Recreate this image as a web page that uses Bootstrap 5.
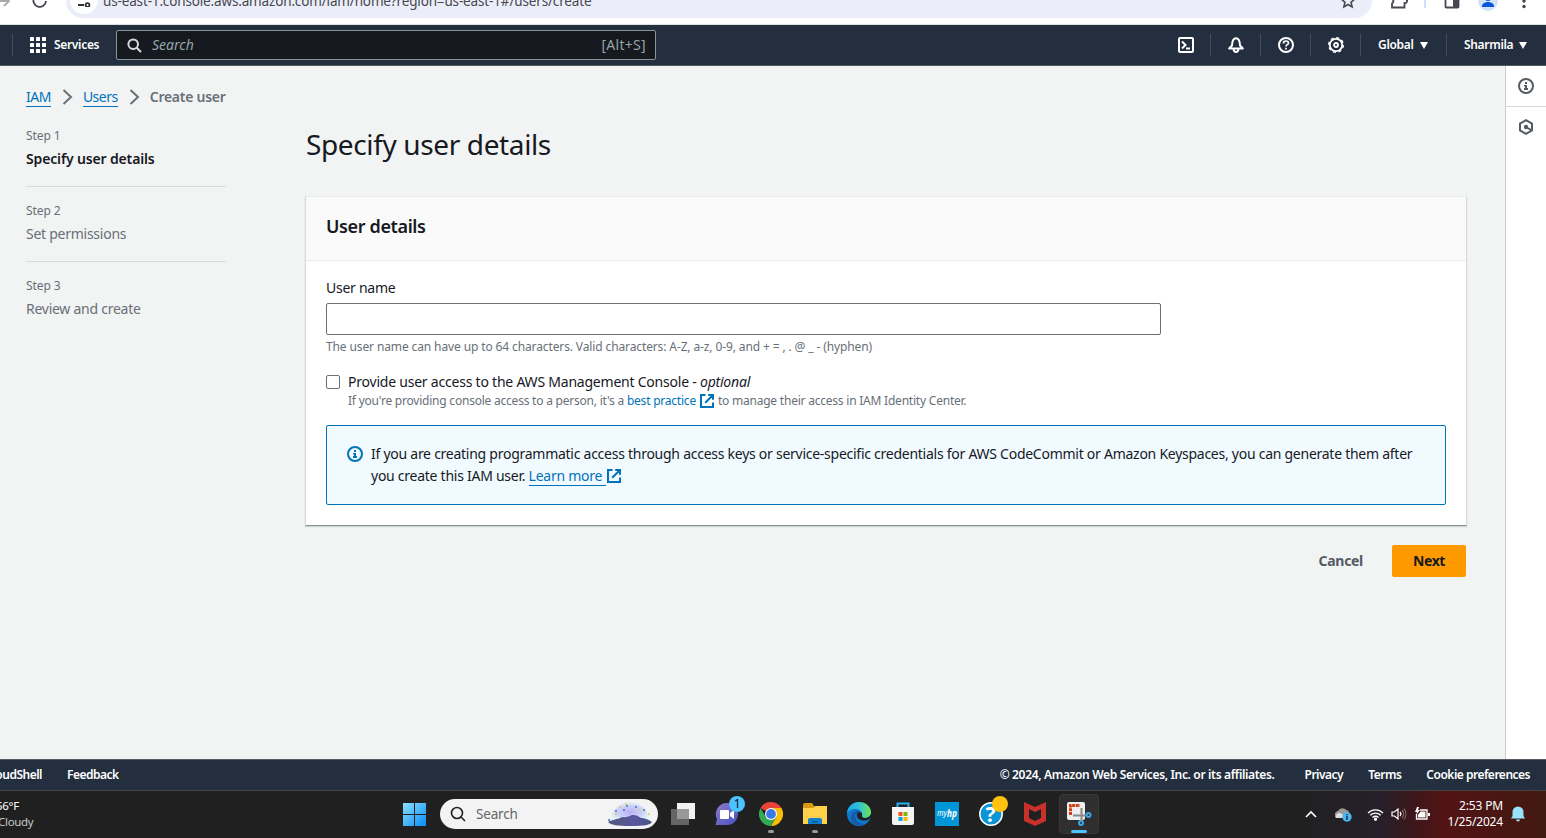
<!DOCTYPE html>
<html lang="en">
<head>
<meta charset="utf-8">
<title>Create user | IAM</title>
<link href="https://cdn.jsdelivr.net/npm/bootstrap@5.3.0/dist/css/bootstrap.min.css" rel="stylesheet">
<style>
body{font-family:"Noto Sans","Open Sans",sans-serif;font-size:14px;line-height:22px;letter-spacing:-.26px;color:#16191f;background:#f2f3f3;height:838px;overflow:hidden;white-space:nowrap}
svg{display:block;flex:none}
a{color:#0073bb}
.chrome-strip{height:25px;background:#fff;border-bottom:1px solid #dfe3e0}
.chrome-row{height:34px;margin-top:-16px}
.url-pill{width:1306px;height:34px;background:#ebeef9;border-radius:17px;color:#47474f;font-size:13.5px;letter-spacing:-.15px}
.site-chip{width:28px;height:28px;border-radius:50%;background:#fff;margin-top:-2px}
.aws-nav{height:41px;background:#232f3e;border-bottom:1px solid #545b64;color:#fff;font-size:12px;font-weight:600;letter-spacing:-.32px}
.nav-rule{width:1px;height:22px;background:#414d5c}
.aws-search{width:540px;height:30px;background:#16191f;border:1px solid #879596;border-radius:2px;color:#95a5a6;font-size:14px;font-weight:400;letter-spacing:0}
.shortcut{letter-spacing:.3px;margin-right:9px}
.nav-ico{width:49px}
.menu-arrow{margin-left:6px}
.workspace{height:693px}
.steps-col{width:200px;margin-left:26px}
.crumbs{height:22px;margin-top:20px;color:#687078}
.crumbs a{text-decoration:none;border-bottom:1px solid #0073bb;line-height:18px;letter-spacing:-.5px}
.crumb-sep{margin:0 10px 0 11px}
.step-item{height:75px;padding-top:17px;color:#687078}
.step-item+.step-item{border-top:1px solid #d5dbdb;padding-top:16px}
.step-no{font-size:12px;line-height:16px;margin-bottom:4px;letter-spacing:-.1px}
.step-now{color:#16191f;font-weight:600;letter-spacing:-.15px}
.form-col{width:1162px;margin-left:79px}
.form-col h1{font-size:28px;line-height:36px;font-weight:400;letter-spacing:-.37px;margin:60px 0 34px 1px}
.panel{background:#fff;border:1px solid #d5dbdb;border-top-color:#eaeded;border-bottom-color:#879596;height:330px;box-shadow:0 1px 1px rgba(0,28,36,.15)}
.panel-head{height:64px;background:#fafafa;border-bottom:1px solid #eaeded;padding:18px 20px}
.panel-head h2{font-size:18px;line-height:22px;font-weight:600;letter-spacing:-.37px;margin:0}
.panel-main{padding:16px 20px}
.name-input{width:835px;height:32px;border:1px solid #687078;border-radius:2px;margin-top:4px}
.hint{font-size:12px;line-height:16px;letter-spacing:-.12px;color:#687078}
.hint-tight{letter-spacing:-.22px}
.opt-row{margin-top:16px;gap:8px}
.opt-label{letter-spacing:-.22px}
.tickbox{width:14px;height:14px;border:1px solid #687078;border-radius:2px;margin-top:4px}
.info-box{height:80px;background:#f1faff;border:1px solid #0073bb;border-radius:2px;padding:17px 20px;margin-top:16px}
.info-box .mark-icon{margin:3px 8px 0 0;color:#0073bb}
.learn{height:21px;text-decoration:none;border-bottom:1px solid #0073bb}
.learn+svg{margin:4px 0 0 1px}
.actions{margin:19px 1px 0 0;gap:29px}
.btn-next,.btn-cancel{font-size:14px;font-weight:700;line-height:20px;padding:0 0 1px;border:0}
.btn-next{width:74px;height:32px;background:#f90;border-radius:2px;color:#16191f;letter-spacing:-.45px}
.btn-cancel{color:#545b64;letter-spacing:-.3px}
.help-rail{width:41px;background:#fff;border-left:1px solid #c9cfcf;color:#545b64}
.help-rail div{height:41px}
.help-rail div:first-child{border-bottom:1px solid #d5dbdb}
.help-rail div+div{height:40px}
.aws-foot{height:32px;background:#232f3e;border-top:1px solid #545b64;border-bottom:1px solid #444;color:#fff;font-size:12px;font-weight:600;letter-spacing:-.5px}
.taskbar{height:47px;padding-bottom:1px;font-size:12px;line-height:16px;letter-spacing:-.17px;color:#fff;background:linear-gradient(90deg,#202020 0,#202020 1300px,#26202a 1380px,#3a171c 1410px,#541315 1445px,#4a1614 1490px,#42190f 1546px)}
.weather{width:403px;font-size:11.5px;letter-spacing:-.3px}
.win-search{width:218px;height:30px;border-radius:15px;background:#f3f3f3;color:#666;font-size:13.5px;margin-left:14px}
.app{width:44px;height:46px;position:relative}
.app.running::after{content:"";position:absolute;left:19px;bottom:4px;width:6px;height:3px;border-radius:2px;background:#999}
.app.active-app::before{content:"";position:absolute;left:2px;top:3px;width:40px;height:40px;border-radius:4px;background:#2f2f2f;border:1px solid #383838}
.app.active-app::after{content:"";position:absolute;left:14px;bottom:4px;width:16px;height:3px;border-radius:2px;background:#4cc2ff}
.app svg{position:relative}
.app-dot{left:24px;top:5px;width:16px;height:16px;background:#4cc2ff;color:#111}
.app-dot.yellow{left:23px;background:#ffc20e}
</style>
</head>
<body>
<svg width="0" height="0" class="position-absolute"><defs>
<symbol id="ext" viewBox="0 0 14 14"><path d="M5.500 1H1v12h12V8.500M8.200 1H13v4.800M13 1 5.200 8.800" fill="none" stroke="#0073bb" stroke-width="2"/></symbol>
<symbol id="info" viewBox="0 0 16 16"><circle cx="8" cy="8" r="7" fill="none" stroke="currentColor" stroke-width="2"/><path d="M7 4h2v2H7zM6 7h3v3h1v2H6v-2h1V8.500H6z" fill="currentColor"/></symbol>
</defs></svg>

<div class="chrome-strip overflow-hidden"><div class="chrome-row d-flex align-items-center">
  <svg width="66" height="34" fill="none" stroke-width="1.800"><path d="M0 17h9M4 12l5 5-5 5" stroke="#aaa"/><path d="M46 17a6.300 6.300 0 1 1-2-5" stroke="#47474f"/></svg>
  <div class="url-pill d-flex align-items-center">
    <div class="site-chip ms-1 d-flex align-items-center justify-content-center"><svg width="14" height="14" fill="none" stroke="#333" stroke-width="1.800"><path d="M1 12h6M7 4h6"/><circle cx="10.500" cy="12" r="1.900"/><circle cx="3" cy="4" r="2"/></svg></div>
    <span style="margin-left:5px">us-east-1.console.aws.amazon.com/iam/home?region=us-east-1#/users/create</span>
    <svg class="ms-auto me-3" width="16" height="16" fill="none" stroke="#47474f" stroke-width="1.600"><path d="M8 1.500l1.900 4.300 4.700.4-3.600 3.100 1.100 4.600L8 11.500l-4.100 2.400L5 9.300 1.400 6.200l4.700-.4z"/></svg>
  </div>
  <svg width="174" height="34" fill="none"><path d="M20 23.500h12.500V19a2 2 0 0 0 1-4v-4H20v4a2.500 2.500 0 0 1 0 4.500z" stroke="#47474f" stroke-width="1.800"/><path d="M53 8v16" stroke="#cfe0fb" stroke-width="2"/><rect x="73.500" y="10" width="13" height="13.500" rx="1" stroke="#47474f" stroke-width="1.800"/><path d="M81 10h6v13h-6z" fill="#47474f"/><circle cx="116" cy="17" r="10" fill="#d3e3fd"/><circle cx="116" cy="14" r="3" fill="#0b57d0"/><path d="M110 23v-1c0-3 4-4 6-4s6 1 6 4v1z" fill="#0b57d0"/><g fill="#47474f"><circle cx="152" cy="11.500" r="1.700"/><circle cx="152" cy="17" r="1.700"/><circle cx="152" cy="22.500" r="1.700"/></g></svg>
</div></div>

<nav class="aws-nav d-flex align-items-center">
  <div class="nav-rule" style="margin-left:12px"></div>
  <svg class="ms-3" width="18" height="16" fill="#fff"><g id="gr"><rect x="1" width="4" height="4" rx=".6"/><rect x="7" width="4" height="4" rx=".6"/><rect x="13" width="4" height="4" rx=".6"/></g><use href="#gr" y="6"/><use href="#gr" y="12"/></svg>
  <span style="margin-left:7px;width:62px">Services</span>
  <div class="aws-search d-flex align-items-center">
    <svg style="margin-left:10px" width="15" height="15" fill="none" stroke="#d5dbdb" stroke-width="2"><circle cx="6.200" cy="6.200" r="4.800"/><path d="M9.700 9.700 14 14"/></svg>
    <i style="margin-left:10px">Search</i><span class="ms-auto shortcut">[Alt+S]</span>
  </div>
  <div class="ms-auto d-flex align-items-center">
    <div class="nav-ico d-flex justify-content-center"><svg width="16" height="16" fill="none" stroke="#fff" stroke-width="2"><rect x="1" y="1" width="14" height="14" rx="1"/><path d="M4 4.500 7.500 8 4 11.500M8 11.500h4"/></svg></div><div class="nav-rule"></div>
    <div class="nav-ico d-flex justify-content-center"><svg width="16" height="16" fill="none" stroke="#fff" stroke-width="2"><path d="M1.200 11.500h13.600L12 8.500C11.800 4 10 1.200 8 1.200S4.200 4 4 8.500zM5.500 12.500C6 14.300 7 15 8 15s2-.7 2.500-2.500" stroke-linejoin="round"/></svg></div><div class="nav-rule"></div>
    <div class="nav-ico d-flex justify-content-center"><svg width="16" height="16" fill="none" stroke="#fff" stroke-width="2"><circle cx="8" cy="8" r="7"/><path d="M5.500 6.500C5.500 4.500 6.500 4 8 4s2.500.8 2.500 2.200C10.500 7.700 8 7.500 8 9.500M8 10.800v1.700" stroke-width="1.700"/></svg></div><div class="nav-rule"></div>
    <div class="nav-ico d-flex justify-content-center"><svg width="16" height="16" fill="none" stroke="#fff"><circle cx="8" cy="8" r="6.200" stroke-width="1.800"/><circle cx="8" cy="8" r="7.300" stroke-width="1.400" stroke-dasharray="3.100 2.630"/><circle cx="8" cy="8" r="2" stroke-width="1.800"/></svg></div><div class="nav-rule"></div>
    <div class="d-flex align-items-center" style="width:85px;padding-left:17px"><span>Global</span><svg class="menu-arrow" width="8" height="7" fill="#fff"><path d="M0 0h8L4 7z"/></svg></div><div class="nav-rule"></div>
    <div class="d-flex align-items-center" style="width:99px;padding-left:17px"><span>Sharmila</span><svg class="menu-arrow" width="8" height="7" fill="#fff"><path d="M0 0h8L4 7z"/></svg></div>
  </div>
</nav>

<main class="workspace d-flex">
  <div class="steps-col">
    <div class="crumbs d-flex align-items-center"><a href="#">IAM</a><svg class="crumb-sep" width="11" height="16" fill="none" stroke="#687078" stroke-width="2"><path d="M1.500 1 9 8l-7.500 7"/></svg><a href="#">Users</a><svg class="crumb-sep" width="11" height="16" fill="none" stroke="#687078" stroke-width="2"><path d="M1.500 1 9 8l-7.500 7"/></svg><span class="fw-semibold">Create user</span></div>
    <div style="margin-top:3px">
      <div class="step-item"><div class="step-no">Step 1</div><div class="step-now">Specify user details</div></div>
      <div class="step-item"><div class="step-no">Step 2</div><div>Set permissions</div></div>
      <div class="step-item"><div class="step-no">Step 3</div><div>Review and create</div></div>
    </div>
  </div>
  <div class="form-col">
    <h1>Specify user details</h1>
    <section class="panel">
      <div class="panel-head"><h2>User details</h2></div>
      <div class="panel-main">
        <div>User name</div>
        <input class="name-input d-block">
        <div class="hint mt-1">The user name can have up to 64 characters. Valid characters: A-Z, a-z, 0-9, and + = , . @ _ - (hyphen)</div>
        <div class="d-flex opt-row"><div class="tickbox"></div><div><div class="opt-label">Provide user access to the AWS Management Console - <i>optional</i></div>
          <div class="hint hint-tight d-flex align-items-center"><span>If you're providing console access to a person, it's a <a href="#" class="text-decoration-none">best practice</a></span><svg class="mx-1" width="14" height="14"><use href="#ext"/></svg><span>to manage their access in IAM Identity Center.</span></div></div></div>
        <div class="info-box d-flex"><svg class="mark-icon" width="16" height="16"><use href="#info"/></svg><div><div>If you are creating programmatic access through access keys or service-specific credentials for AWS CodeCommit or Amazon Keyspaces, you can generate them after</div><div class="d-flex"><span>you create this IAM user.&nbsp;</span><a href="#" class="learn">Learn more&nbsp;</a><svg width="14" height="14"><use href="#ext"/></svg></div></div></div>
      </div>
    </section>
    <div class="actions d-flex justify-content-end align-items-center"><button class="btn btn-cancel">Cancel</button><button class="btn btn-next">Next</button></div>
  </div>
  <aside class="help-rail ms-auto"><div class="d-flex align-items-center justify-content-center"><svg width="16" height="16"><use href="#info"/></svg></div><div class="d-flex align-items-center justify-content-center"><svg width="16" height="16" fill="none" stroke="currentColor" stroke-width="2"><path d="M8 1.200 14 4.600v6.800l-6 3.400-6-3.400V4.600z"/><path d="M8 8l5 3"/><circle cx="8" cy="8" r="1.200" fill="currentColor"/></svg></div></aside>
</main>

<footer class="aws-foot d-flex align-items-center"><div class="overflow-hidden d-flex justify-content-end" style="width:42px"><span>CloudShell</span></div><span style="margin-left:25px">Feedback</span><span class="ms-auto" style="letter-spacing:-.34px">© 2024, Amazon Web Services, Inc. or its affiliates.</span><span style="margin-left:30px">Privacy</span><span style="margin-left:25px">Terms</span><span style="margin:0 16px 0 25px">Cookie preferences</span></footer>

<div class="taskbar d-flex align-items-center">
  <div class="weather"><div style="margin-left:-4px">56°F</div><div style="margin-left:-2px;color:#c8c8c8">Cloudy</div></div>
  <svg width="23" height="23"><defs><linearGradient id="w" x2="1" y2="1"><stop stop-color="#8be0ff"/><stop offset="1" stop-color="#0a8bf5"/></linearGradient></defs><path fill="url(#w)" d="M0 0h11v11H0zM12 0h11v11H12zM0 12h11v11H0zM12 12h11v11H12z"/></svg>
  <div class="win-search d-flex align-items-center"><svg style="margin-left:10px" width="16" height="16" fill="none" stroke="#222" stroke-width="1.600"><circle cx="7" cy="7" r="5.500"/><path d="m11 11 4 4"/></svg><span style="margin-left:10px">Search</span>
    <svg class="ms-auto" style="margin-right:5px" width="46" height="26"><defs><radialGradient id="sky"><stop stop-color="#b9b0f4"/><stop offset=".65" stop-color="#ccd6f8"/><stop offset="1" stop-color="#e5f5f5"/></radialGradient><linearGradient id="hill" x2="1"><stop stop-color="#4e5775"/><stop offset=".6" stop-color="#5b56a0"/><stop offset="1" stop-color="#465585"/></linearGradient></defs><path d="M2 21C5 7 14 1 23 1s18 6 21 20z" fill="url(#sky)"/><path d="M1 21c5-3 9-2 14-5 4 1 7-1 10-2 5 0 6 1 9 3 4 0 8 2 11 4-2 3-7 4-21 4S4 24 1 21z" fill="url(#hill)"/><g fill="#4a6bd0"><circle cx="9" cy="10" r="1"/><circle cx="17" cy="9" r="1"/><circle cx="20" cy="5" r="1"/><circle cx="29" cy="6" r="1"/><circle cx="37" cy="9" r="1"/><circle cx="2" cy="19" r="1"/></g><g fill="#edc158"><circle cx="13" cy="6" r="1"/><circle cx="19" cy="3" r="1"/><circle cx="33" cy="9" r="1"/><circle cx="42" cy="13" r="1"/><circle cx="9" cy="13" r="1"/></g></svg></div>
  <div class="d-flex" style="margin-left:3px">
    <div class="app d-flex align-items-center justify-content-center"><svg width="24" height="24"><path fill="#f2f2f2" d="M6 1h18v16H6z"/><path fill="#656565" d="M0 7h18v16H0z"/><path fill="#999" d="M6 7h12v10H6z"/></svg></div>
    <div class="app d-flex align-items-center justify-content-center"><svg width="26" height="26"><defs><linearGradient id="ch" x2="1" y2="1"><stop stop-color="#8f7ac8"/><stop offset="1" stop-color="#4652c5"/></linearGradient></defs><path d="M13 2a11 11 0 1 1 0 22H1.500l1.500-6A11 11 0 0 1 13 2z" fill="url(#ch)"/><rect x="6" y="9" width="9" height="9" rx="1" fill="#fff"/><path d="M16 12l4-3v9l-4-3z" fill="#fff"/></svg><span class="app-dot position-absolute rounded-circle text-center">1</span></div>
    <div class="app running d-flex align-items-center justify-content-center"><svg width="24" height="24" viewBox="-12 -12 24 24"><path fill="#ea4335" d="M0 0-10.400-6A12 12 0 0 1 10.400-6z"/><path fill="#fbbc04" d="M0-6h10.400A12 12 0 0 1 0 12L5.200 3z"/><path fill="#34a853" d="M-10.400-6-5.200 3 5.200 3 0 12A12 12 0 0 1-10.400-6z"/><circle r="6" fill="#fff"/><circle r="4.900" fill="#3b78e7"/></svg></div>
    <div class="app running d-flex align-items-center justify-content-center"><svg width="24" height="22"><path fill="#d99a10" d="M0 2a2 2 0 0 1 2-2h7l2 3v5H0z"/><path fill="#ffd04a" d="M0 5h10l2-2h12v18H0z"/><path fill="#1080cf" d="M5 21v-4a2 2 0 0 1 2-2h10a2 2 0 0 1 2 2v4z"/><path fill="#0a5a9c" d="M9 18h6v1.500H9z"/></svg></div>
    <div class="app d-flex align-items-center justify-content-center"><svg width="24" height="24"><defs><linearGradient id="eg" x2="1"><stop stop-color="#1ba5e8"/><stop offset=".5" stop-color="#31c3d6"/><stop offset="1" stop-color="#6ee34f"/></linearGradient></defs><circle cx="12" cy="12" r="12" fill="#0f79cf"/><path d="M0 11C1 4 6 0 12 0c7 0 12 5 12 10 0 4-3 6-6 6-3 0-4-1-3-3 1-5-8-10-15-2z" fill="url(#eg)"/><path d="M8 13c0 5 4 9 9 9-4 3-11 2-13-4-1-4 1-8 5-9 3-1 6 1 6 4-3-2-6-2-7 0z" fill="#145aa5"/><path d="M10 12c-1 4 3 8 11 6l3-3v-3c-2 5-10 5-9 1 1-3-4-4-5-1z" fill="#202020"/></svg></div>
    <div class="app d-flex align-items-center justify-content-center"><svg width="24" height="24"><path d="M6.500 6V1.500h11V6" fill="none" stroke="#26aef0" stroke-width="2"/><path fill="#f3f3f3" d="M1 5h22v16a2 2 0 0 1-2 2H3a2 2 0 0 1-2-2z"/><path fill="#f25022" d="M7.500 10h4v4h-4z"/><path fill="#7fba00" d="M12.500 10h4v4h-4z"/><path fill="#00a4ef" d="M7.500 15h4v4h-4z"/><path fill="#ffb900" d="M12.500 15h4v4h-4z"/></svg></div>
    <div class="app d-flex align-items-center justify-content-center"><svg width="24" height="24" letter-spacing="0"><path fill="#0096d6" d="M0 0h24v24H0z"/><text x="2" y="14" font-size="8" font-style="italic" fill="#fff" textLength="10" lengthAdjust="spacingAndGlyphs">my</text><text x="12" y="15" font-size="11" font-weight="700" font-style="italic" fill="#fff" textLength="10" lengthAdjust="spacingAndGlyphs">hp</text></svg></div>
    <div class="app d-flex align-items-center justify-content-center"><svg width="24" height="24"><circle cx="12" cy="12" r="11.200" fill="#0b94d6" stroke="#fff" stroke-width="1.500"/><text x="6.500" y="20" font-size="21" font-weight="700" fill="#fff">?</text></svg><span class="app-dot yellow position-absolute rounded-circle"></span></div>
    <div class="app d-flex align-items-center justify-content-center"><svg width="22" height="24"><path fill="#c9302c" d="M0 0 11 5 22 0v19l-11 5-11-5z"/><path fill="#202020" d="M5 7l6 3 6-3v9l-6 3-6-3z"/></svg></div>
    <div class="app active-app d-flex align-items-center justify-content-center"><svg width="26" height="26"><rect x="1" y="1" width="18" height="18" rx="2" fill="#eee"/><path d="M4.500 14V4.500H14" fill="none" stroke="#d43c12" stroke-width="3" stroke-dasharray="3 .7"/><path d="M7 14.500h8.500V7M15 15l6-1M15.500 15v5" stroke="#888" stroke-width="2" fill="none"/><g fill="none" stroke="#3ba7e8" stroke-width="2"><circle cx="22.500" cy="14" r="2"/><circle cx="15" cy="22" r="2"/></g></svg></div>
  </div>
  <div class="ms-auto d-flex align-items-center" style="margin-right:21px">
    <svg width="12" height="8" fill="none" stroke="#fff" stroke-width="1.600"><path d="m1 7 5-5 5 5"/></svg>
    <svg style="margin-left:18px" width="17" height="16"><path d="M1 12a4 4 0 0 1 2-7c2-4 7-3 8-1 3 0 4 3 3 8z" fill="#999"/><path d="M1 12c-1-5 4-6 6-4l5 4z" fill="#ddd"/><circle cx="12" cy="11" r="4.700" fill="#4cb5ef"/><path d="M12 10v4M12 8v1.200" stroke="#123" stroke-width="1.300"/></svg>
    <svg style="margin-left:15px" width="17" height="13" fill="none" stroke="#fff" stroke-width="1.300"><path d="M1 5a10.500 10.500 0 0 1 15 0M3.300 7.300a7.300 7.300 0 0 1 10.400 0M5.500 9.500a4.200 4.200 0 0 1 6 0"/><circle cx="8.500" cy="11.200" r="1" fill="#fff"/></svg>
    <svg style="margin-left:7px" width="16" height="14" fill="none" stroke="#fff" stroke-width="1.200"><path d="M1 5h2.500L7 2v10L3.500 9H1z"/><path d="M9 5a3 3 0 0 1 0 4"/><path d="M11 3a6 6 0 0 1 0 8M13 1.500a9 9 0 0 1 0 11" stroke="#866"/></svg>
    <svg style="margin-left:7px" width="17" height="14"><path d="M6 3h7v9H2.500V7" fill="none" stroke="#fff" stroke-width="1.300"/><path d="M6.500 4.500h5v6H4V8z" fill="#fff"/><path d="M14 6h2v3h-2zM3 0 1 5h2L2 8l4-5H4l1-3z" fill="#fff"/></svg>
    <div class="text-end" style="width:72px"><div>2:53 PM</div><div>1/25/2024</div></div>
    <svg style="margin-left:8px" width="14" height="16" fill="#98e3fb"><path d="M0 12.500 1.500 10V6a5.500 5.500 0 0 1 11 0v4l1.500 2.500zM5 13.500h4a2 2 0 0 1-4 0z"/></svg>
  </div>
</div>
<script src="https://cdn.jsdelivr.net/npm/bootstrap@5.3.0/dist/js/bootstrap.bundle.min.js"></script>
</body>
</html>
